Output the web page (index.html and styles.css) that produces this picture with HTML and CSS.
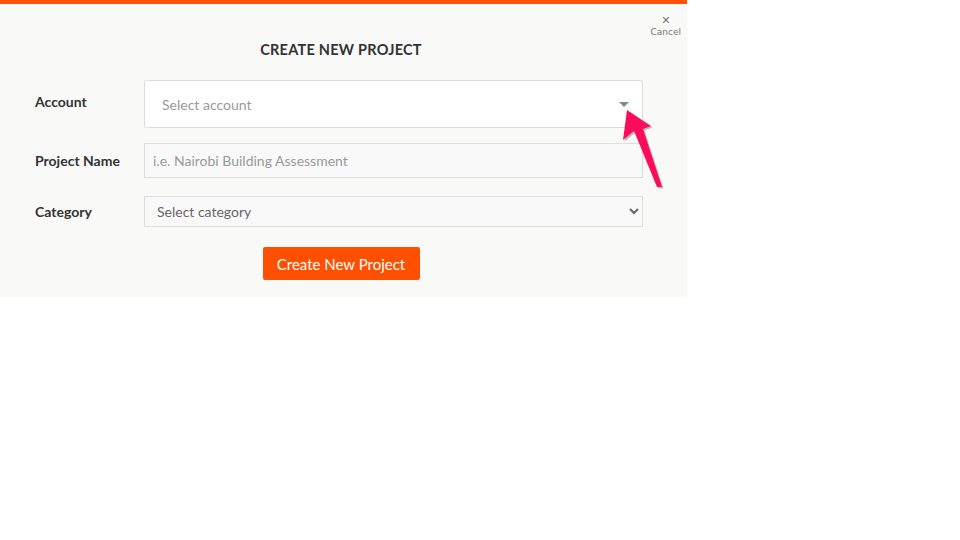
FILE: index.html
```html
<!DOCTYPE html>
<html>
<head>
<meta charset="utf-8">
<link rel="stylesheet" href="styles.css">
</head>
<body>
<div class="modal">
  <div class="topbar"></div>
  <div class="panel">
    <button class="cancel" type="button"><span class="x">&#x2715;</span><span class="cancel-text">Cancel</span></button>
    <h1 class="title">CREATE NEW PROJECT</h1>
    <div class="row row-account">
      <label class="label label-account">Account</label>
      <div class="fake-select">
        <span class="placeholder">Select account</span>
        <span class="tri"></span>
      </div>
    </div>
    <div class="row row-name">
      <label class="label">Project Name</label>
      <input class="text-input" type="text" placeholder="i.e. Nairobi Building Assessment">
    </div>
    <div class="row row-cat">
      <label class="label">Category</label>
      <select class="native-select"><option>Select category</option></select>
    </div>
    <div class="actions">
      <button class="btn" type="button">Create New Project</button>
    </div>
    <svg class="pointer" width="60" height="110" viewBox="0 0 60 110">
      <polygon points="9,22 33,38 25,41 44,99 39,99 16,43 5,52" fill="#000" opacity="0.25" transform="translate(1.5,1.5)"/>
      <polygon points="9,22 33,38 25,41 44,99 39,99 16,43 5,52" fill="#fe0b5b"/>
    </svg>
  </div>
</div>
</body>
</html>
```
FILE: styles.css
```css
html, body {
  margin: 0;
  padding: 0;
  background: #fff;
  font-family: "Lato", "Open Sans", sans-serif;
}
.modal {
  width: 687px;
}
.topbar {
  height: 4px;
  background: #ff5100;
}
.panel {
  position: relative;
  background: #f9f9f8;
  padding: 37px 44px 0 35px;
  height: 256px;
}
.title {
  margin: 0 0 21px 0;
  padding-left: 4px;
  text-align: center;
  font-size: 14.5px;
  font-weight: 700;
  color: #333;
  letter-spacing: 0.25px;
  line-height: 18px;
}
.cancel {
  position: absolute;
  top: 11px;
  right: 6px;
  border: 0;
  background: none;
  padding: 0;
  display: flex;
  flex-direction: column;
  align-items: center;
  color: #777;
  font-family: "DejaVu Sans", sans-serif;
  cursor: pointer;
}
.cancel .x {
  font-size: 11px;
  line-height: 12px;
  font-weight: 700;
  color: #777;
}
.cancel-text {
  font-size: 9px;
  line-height: 10px;
}
.row {
  display: flex;
  align-items: center;
}
.label {
  width: 109px;
  flex: none;
  font-size: 14px;
  font-weight: 700;
  color: #333;
}
.label-account {
  padding-bottom: 6px;
}
.row-name { margin-top: 15px; }
.row-cat { margin-top: 18px; }
.fake-select {
  flex: 1;
  height: 46px;
  border: 1px solid #ddd;
  border-radius: 2px;
  background: #fff;
  display: flex;
  align-items: center;
  justify-content: space-between;
  padding: 0 13px 0 17px;
}
.placeholder {
  font-size: 14px;
  color: #999;
}
.tri {
  width: 0;
  height: 0;
  border-left: 5px solid transparent;
  border-right: 5px solid transparent;
  border-top: 5px solid #888;
}
.text-input {
  flex: 1;
  height: 35px;
  box-sizing: border-box;
  border: 1px solid #ddd;
  background: #f9f9f9;
  padding: 0 8px;
  font-family: inherit;
  font-size: 14px;
  color: #333;
  outline: none;
}
.text-input::placeholder {
  color: #999;
}
.native-select {
  flex: 1;
  height: 31px;
  border: 1px solid #ddd;
  border-radius: 0;
  background: #f9f9f9;
  padding: 0 8px;
  font-family: inherit;
  font-size: 14px;
  color: #666;
}
.actions {
  display: flex;
  justify-content: center;
  margin-top: 20px;
  padding-left: 4px;
}
.btn {
  width: 157px;
  height: 33px;
  border: 0;
  border-radius: 2px;
  background: #ff5000;
  color: #fff;
  font-family: inherit;
  font-size: 15px;
}
.pointer {
  position: absolute;
  left: 618px;
  top: 84px;
  width: 60px;
  height: 110px;
  overflow: visible;
}
```
